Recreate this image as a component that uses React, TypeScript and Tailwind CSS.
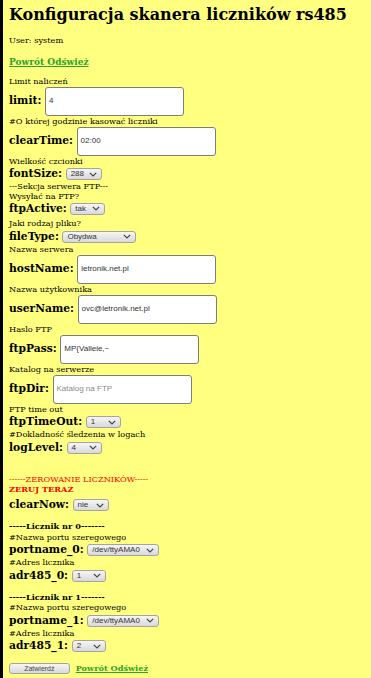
import type { ReactNode } from "react";

function Note({ children, className = "" }: { children: ReactNode; className?: string }) {
  return <div className={`text-[8.2px] leading-[9.3px] ${className}`}>{children}</div>;
}

function Label({ children }: { children: ReactNode }) {
  return <span className="text-[10.7px] font-bold leading-[12px]">{children}</span>;
}

function Chevron() {
  return (
    <svg width="8" height="5" viewBox="0 0 8 5" className="shrink-0">
      <polyline points="0.8,0.8 4,4 7.2,0.8" fill="none" stroke="#444" strokeWidth="1.2" />
    </svg>
  );
}

function TextRow({ label, value, placeholder }: { label: string; value?: string; placeholder?: string }) {
  return (
    <div className="flex h-[30.7px] items-center gap-[3.6px]">
      <Label>{label}</Label>
      <div className="flex h-[29.5px] w-[139px] items-center rounded-[3px] border border-[#7d7d7d] bg-white pl-[3px] font-['Liberation_Sans',sans-serif] text-[8px]">
        {value ? <span className="text-[#333]">{value}</span> : <span className="text-[#8a8a8a]">{placeholder}</span>}
      </div>
    </div>
  );
}

function SelectRow({ label, value, width, className = "" }: { label: string; value: string; width: string; className?: string }) {
  return (
    <div className={`flex h-[16.3px] items-center gap-[3.6px] ${className}`}>
      <Label>{label}</Label>
      <div
        className={`flex h-[12px] ${width} items-center justify-between rounded-[3px] border border-[#a3a3a3] bg-gradient-to-b from-[#f6f6f6] to-[#d9d9d9] pl-[4px] pr-[4px] font-['Liberation_Sans',sans-serif] text-[8px] leading-none text-[#333]`}
      >
        <span>{value}</span>
        <Chevron />
      </div>
    </div>
  );
}

function Links({ className = "" }: { className?: string }) {
  return (
    <span className={`font-bold text-[#2ba42b] underline ${className}`}>
      Powrót <span>Odśwież</span>
    </span>
  );
}

export default function App() {
  return (
    <div className="min-h-screen border-l-[3px] border-black bg-[#ffff80] pl-[6px] pt-[6px] font-['DejaVu_Serif','Liberation_Serif',serif] text-black">
      <h1 className="text-[16px] font-bold leading-[18px]">Konfiguracja skanera liczników rs485</h1>

      <Note className="mt-[12.2px]">User: system</Note>

      <div className="mt-[9.8px] leading-[10.4px]">
        <Links className="text-[9px]" />
      </div>

      <Note className="mt-[9px]">Limit naliczeń</Note>
      <TextRow label="limit:" value="4" />
      <Note>#O której godzinie kasować liczniki</Note>
      <TextRow label="clearTime:" value="02:00" />
      <Note>Wielkość czcionki</Note>
      <SelectRow label="fontSize:" value="288" width="w-[36px]" />
      <Note>---Sekcja serwera FTP---</Note>
      <Note>Wysyłać na FTP?</Note>
      <SelectRow label="ftpActive:" value="tak" width="w-[35px]" />
      <Note className="mt-[2px]">Jaki rodzaj pliku?</Note>
      <SelectRow label="fileType:" value="Obydwa" width="w-[74px]" />
      <Note>Nazwa serwera</Note>
      <TextRow label="hostName:" value="letronik.net.pl" />
      <Note>Nazwa użytkownika</Note>
      <TextRow label="userName:" value="ovc@letronik.net.pl" />
      <Note>Haslo FTP</Note>
      <TextRow label="ftpPass:" value="MP{Valleie,~" />
      <Note>Katalog na serwerze</Note>
      <TextRow label="ftpDir:" placeholder="Katalog na FTP" />
      <Note>FTP time out</Note>
      <SelectRow label="ftpTimeOut:" value="1" width="w-[35px]" />
      <Note>#Dokladność śledzenia w logach</Note>
      <SelectRow label="logLevel:" value="4" width="w-[35px]" />

      <Note className="mt-[19px] text-[#ff0000]">------ZEROWANIE LICZNIKÓW-----</Note>
      <div className="h-[10px] text-[8.2px] font-bold leading-[10px] text-[#ff0000]">ZERUJ TERAZ</div>
      <SelectRow label="clearNow:" value="nie" width="w-[36px]" className="mt-[3px]" />

      <Note className="mt-[9px] font-bold">-----Licznik nr 0-------</Note>
      <Note className="mt-[1px]">#Nazwa portu szeregowego</Note>
      <SelectRow label="portname_0:" value="/dev/ttyAMA0" width="w-[72px]" />
      <Note>#Adres licznika</Note>
      <SelectRow label="adr485_0:" value="1" width="w-[34px]" />

      <Note className="mt-[9px] font-bold">-----Licznik nr 1-------</Note>
      <Note className="mt-[1px]">#Nazwa portu szeregowego</Note>
      <SelectRow label="portname_1:" value="/dev/ttyAMA0" width="w-[72px]" />
      <Note>#Adres licznika</Note>
      <SelectRow label="adr485_1:" value="2" width="w-[34px]" />

      <div className="mt-[9px] flex items-center gap-[6px] pb-[4px]">
        <button className="flex h-[10.6px] w-[60.7px] items-center justify-center rounded-[3px] border border-[#a3a3a3] bg-gradient-to-b from-[#f6f6f6] to-[#d9d9d9] font-['Liberation_Sans',sans-serif] text-[7px] leading-none text-[#444]">
          Zatwierdź
        </button>
        <Links className="text-[8.2px] leading-[9.5px]" />
      </div>
    </div>
  );
}
